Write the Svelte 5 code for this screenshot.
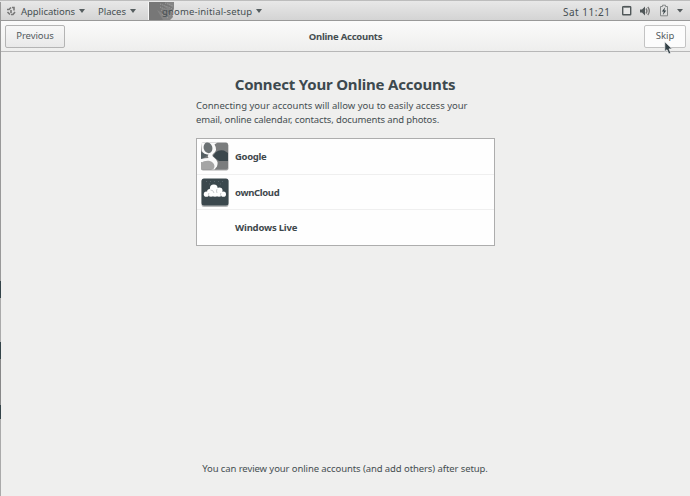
<script>
  const accounts = [
    { name: 'Google', icon: 'google', spacing: -0.3 },
    { name: 'ownCloud', icon: 'cloud', spacing: -0.35 },
    { name: 'Windows Live', icon: '', spacing: -0.2 }
  ];
</script>

<div class="screen">
  <nav class="panel">
    <svg class="foot" width="10" height="10" viewBox="0 0 10 10" fill="none" stroke="#777" stroke-width="1.6">
      <path d="M1 3.5h2l2-2M6 1.5h2v3M9 6l-2 2.5H5M4 8.5L1.5 6M5 4v3" />
    </svg>
    <span class="apps">Applications</span><i class="arrow"></i>
    <span class="places">Places</span><i class="arrow"></i>
    <div class="current">
      <svg width="27" height="18" viewBox="0 0 27 18">
        <path d="M1 0H26V7L24 11L25 15L22 18H1Z" fill="#858585" />
        <path d="M1 0H17L25 6V8L15 3L24 12L12 5L21 15L9 8L15 18H1Z" fill="#777" />
        <path d="M12 2l13 5M12 5l12 5M13 8l10 6M17 1l8 3M14 12l6 4" stroke="#aaa" stroke-width=".8" stroke-dasharray="1 1" />
        <path d="M.5 0V18" stroke="#f8f8f8" />
      </svg>
      <span class="appname">gnome-initial-setup</span>
    </div><i class="arrow"></i>
    <span class="clock">Sat 11:21</span>
    <svg class="tray" width="70" height="14" viewBox="0 0 70 14">
      <rect x="2.7" y="2.7" width="8" height="8" rx=".5" fill="#e7e7e7" stroke="#505759" stroke-width="1.4" />
      <path d="M4 2.6h5.5" stroke="#505759" stroke-width="1.4" />
      <path d="M20 5.5h2l3-3v9l-3-3h-2Z" fill="#505759" />
      <path d="M26 4.5q2 2.5 0 5M27.8 3q3 4 0 8" fill="none" stroke="#777" stroke-width="1.3" />
      <path d="M42.5 2.5V1.2h3v1.3h2v9.3h-7V2.5Z" fill="#ddd" stroke="#858888" />
      <path d="M45.2 3.2L41.8 7.4h2l-1 3.5 3.5-4.4h-2Z" fill="#344044" />
      <path d="M57 5h6l-3 3.6Z" fill="#555b5d" />
    </svg>
  </nav>

  <header>
    <button class="previous">Previous</button>
    <h1>Online Accounts</h1>
    <button class="skip">Skip</button>
  </header>

  <main>
    <h2>Connect Your Online Accounts</h2>
    <p class="intro"><span class="line1">Connecting your accounts will allow you to easily access your</span><br /><span class="line2">email, online calendar, contacts, documents and photos.</span></p>
    <ul>
      {#each accounts as account}
        <li>
          <div class="icon">
            {#if account.icon === 'google'}
              <svg width="28" height="29" viewBox="0 0 28 29">
                <rect x="0" y="1.5" width="27.5" height="27" rx="2" fill="#aaa" />
                <rect x="0" y=".5" width="27" height="27" rx="2" fill="#7b7d7e" />
                <path d="M12 14L15 10Q18 7.5 23 8.5L27 11V19H18L14 16Z" fill="#3b474c" />
                <path d="M0 10L7 13L0 18Z" fill="#566064" />
                <path d="M0 .5H16.5L13.5 2.5Q17 8 12.5 11.5Q10 13.5 13 15.5Q18 19 16 24.5L13.5 27.5H11L0 20V17Q4 16 7.5 16Q6 14 7.5 12.5Q3 12.5 .8 9Z" fill="#fafafa" />
                <ellipse cx="7" cy="5.8" rx="4.3" ry="5.4" transform="rotate(-16 7 5.8)" fill="#6b7173" />
                <path d="M0 21Q3 18.3 8 18.8Q13 20 13.5 24Q13.5 26.5 12 27.5H0Z" fill="#a5a5a5" />
              </svg>
            {:else if account.icon === 'cloud'}
              <svg width="28" height="29" viewBox="0 0 28 29">
                <rect x=".5" y="1" width="27" height="28" rx="2.5" fill="#b5b7b8" />
                <rect x=".5" y=".5" width="27" height="27" rx="2.5" fill="#3b484d" />
                <g fill="#fff">
                  <circle cx="5.4" cy="16.2" r="2.6" /><circle cx="22.4" cy="16.2" r="2.6" />
                  <circle cx="8.8" cy="13.7" r="2.7" /><circle cx="18.4" cy="12.6" r="3.1" />
                  <circle cx="12.8" cy="10.4" r="3.9" /><circle cx="10" cy="15.7" r="3" />
                  <circle cx="18" cy="15.7" r="3" /><circle cx="14" cy="15.2" r="3.6" />
                </g>
                <path d="M9.5 12q3 0 3.5 3M16 11q-1 2 0 4M8 15q-1 1 0 3M20 15q-1 1 0 3" fill="none" stroke="#b0b5b7" stroke-width=".7" />
                <path d="M5 3.5h18M8 6h2M19 6h2" stroke="#68747a" stroke-width=".7" stroke-dasharray="1 3" />
              </svg>
            {/if}
          </div>
          <b style="letter-spacing: {account.spacing}px">{account.name}</b>
        </li>
      {/each}
    </ul>
    <footer>You can review your online accounts (and add others) after setup.</footer>
  </main>

  <div class="edge"></div>
  <svg class="cursor" width="9" height="14" viewBox="0 0 9 14">
    <path d="M.8 .8V10.6L3 8.7L4.8 13L6.8 12.1L5 7.9H8.2Z" fill="#344147" stroke="#f3f3f3" stroke-width=".7" />
  </svg>
</div>

<style>
  :global(body) { background: #efefee; }
  .screen {
    position: relative; width: 690px; height: 496px; overflow: hidden;
    display: flex; flex-direction: column; box-sizing: border-box;
    background: #efefee; color: #454e51;
    font: 9.5px/14px "Noto Sans", "Open Sans", sans-serif; white-space: nowrap;
  }
  .panel {
    flex: none; box-sizing: border-box; height: 21px; padding: 1px 0 0 6px; display: flex; align-items: center;
    background: linear-gradient(#e8e8e8, #d4d4d4); border-top: 1px solid #bdbdbd; border-bottom: 1px solid #999;
  }
  .foot { margin-right: 5px; }
  .arrow { width: 0; height: 0; border: 3px solid transparent; border-top: 4px solid #555d5f; border-bottom: 0; }
  .apps { width: 58px; letter-spacing: -.05px; }
  .places { width: 32px; margin-left: 13px; }
  .current { display: flex; align-items: center; margin-left: 12px; width: 108px; }
  .current svg { flex: none; }
  .appname { margin-left: -13px; letter-spacing: .16px; }
  .panel span { padding-top: 1px; }
  .clock { margin-left: auto; width: 57px; font-size: 10px; letter-spacing: .5px; }
  .tray { width: 70px; }
  header {
    flex: none; box-sizing: border-box; height: 31px; padding: 0 4px 0 5px; display: grid;
    grid-template-columns: 60px 1fr 42px; align-items: center;
    background: linear-gradient(#fbfbfb, #eeeeed); border-bottom: 1px solid #b7b7b7;
  }
  h1 { margin: 0; font-size: 9.5px; line-height: 14px; text-align: center; padding: 2px 18px 0 0; letter-spacing: -.25px; }
  button {
    height: 23px; padding: 0; border: 1px solid #b4b4b4; border-radius: 2px; font: inherit; color: #535b5e;
    background: linear-gradient(#f8f8f8, #e9e9e9);
  }
  .previous { letter-spacing: -.1px; }
  .skip { background: #fcfcfc; border-color: #c3c3c3; }
  main { flex: 1; display: flex; flex-direction: column; align-items: center; }
  h2 { margin: 22px 0 0; font-size: 15px; line-height: 20px; color: #3d494e; letter-spacing: -.19px; }
  .intro { margin: 5px 0 0 1px; width: 299px; }
  .line2 { letter-spacing: -.13px; }
  ul {
    box-sizing: border-box; width: 299px; height: 108px; margin: 11px 0 0 1px; padding: 0; list-style: none;
    background: #fefefe; border: 1px solid #adadad;
  }
  li { display: flex; align-items: center; height: 35.7px; box-sizing: border-box; padding-left: 4px; border-bottom: 1px solid #efefef; }
  li:last-child { border: 0; }
  .icon { width: 28px; height: 29px; margin-right: 6px; }
  b { color: #3e484c; padding-top: 1px; }
  li:last-child b { padding-top: 0; }
  footer { margin-top: auto; margin-bottom: 20px; letter-spacing: -.09px; }
  .edge {
    position: absolute; left: 0; top: 2px; bottom: 0; width: 1px;
    background: linear-gradient(#999 0 279px, #344449 279px 296px, #aaa 296px 340px, #344449 340px 357px, #888 357px 403px, #344449 403px 417px, #aaa 417px);
  }
  .cursor { position: absolute; left: 664px; top: 41px; }
</style>
